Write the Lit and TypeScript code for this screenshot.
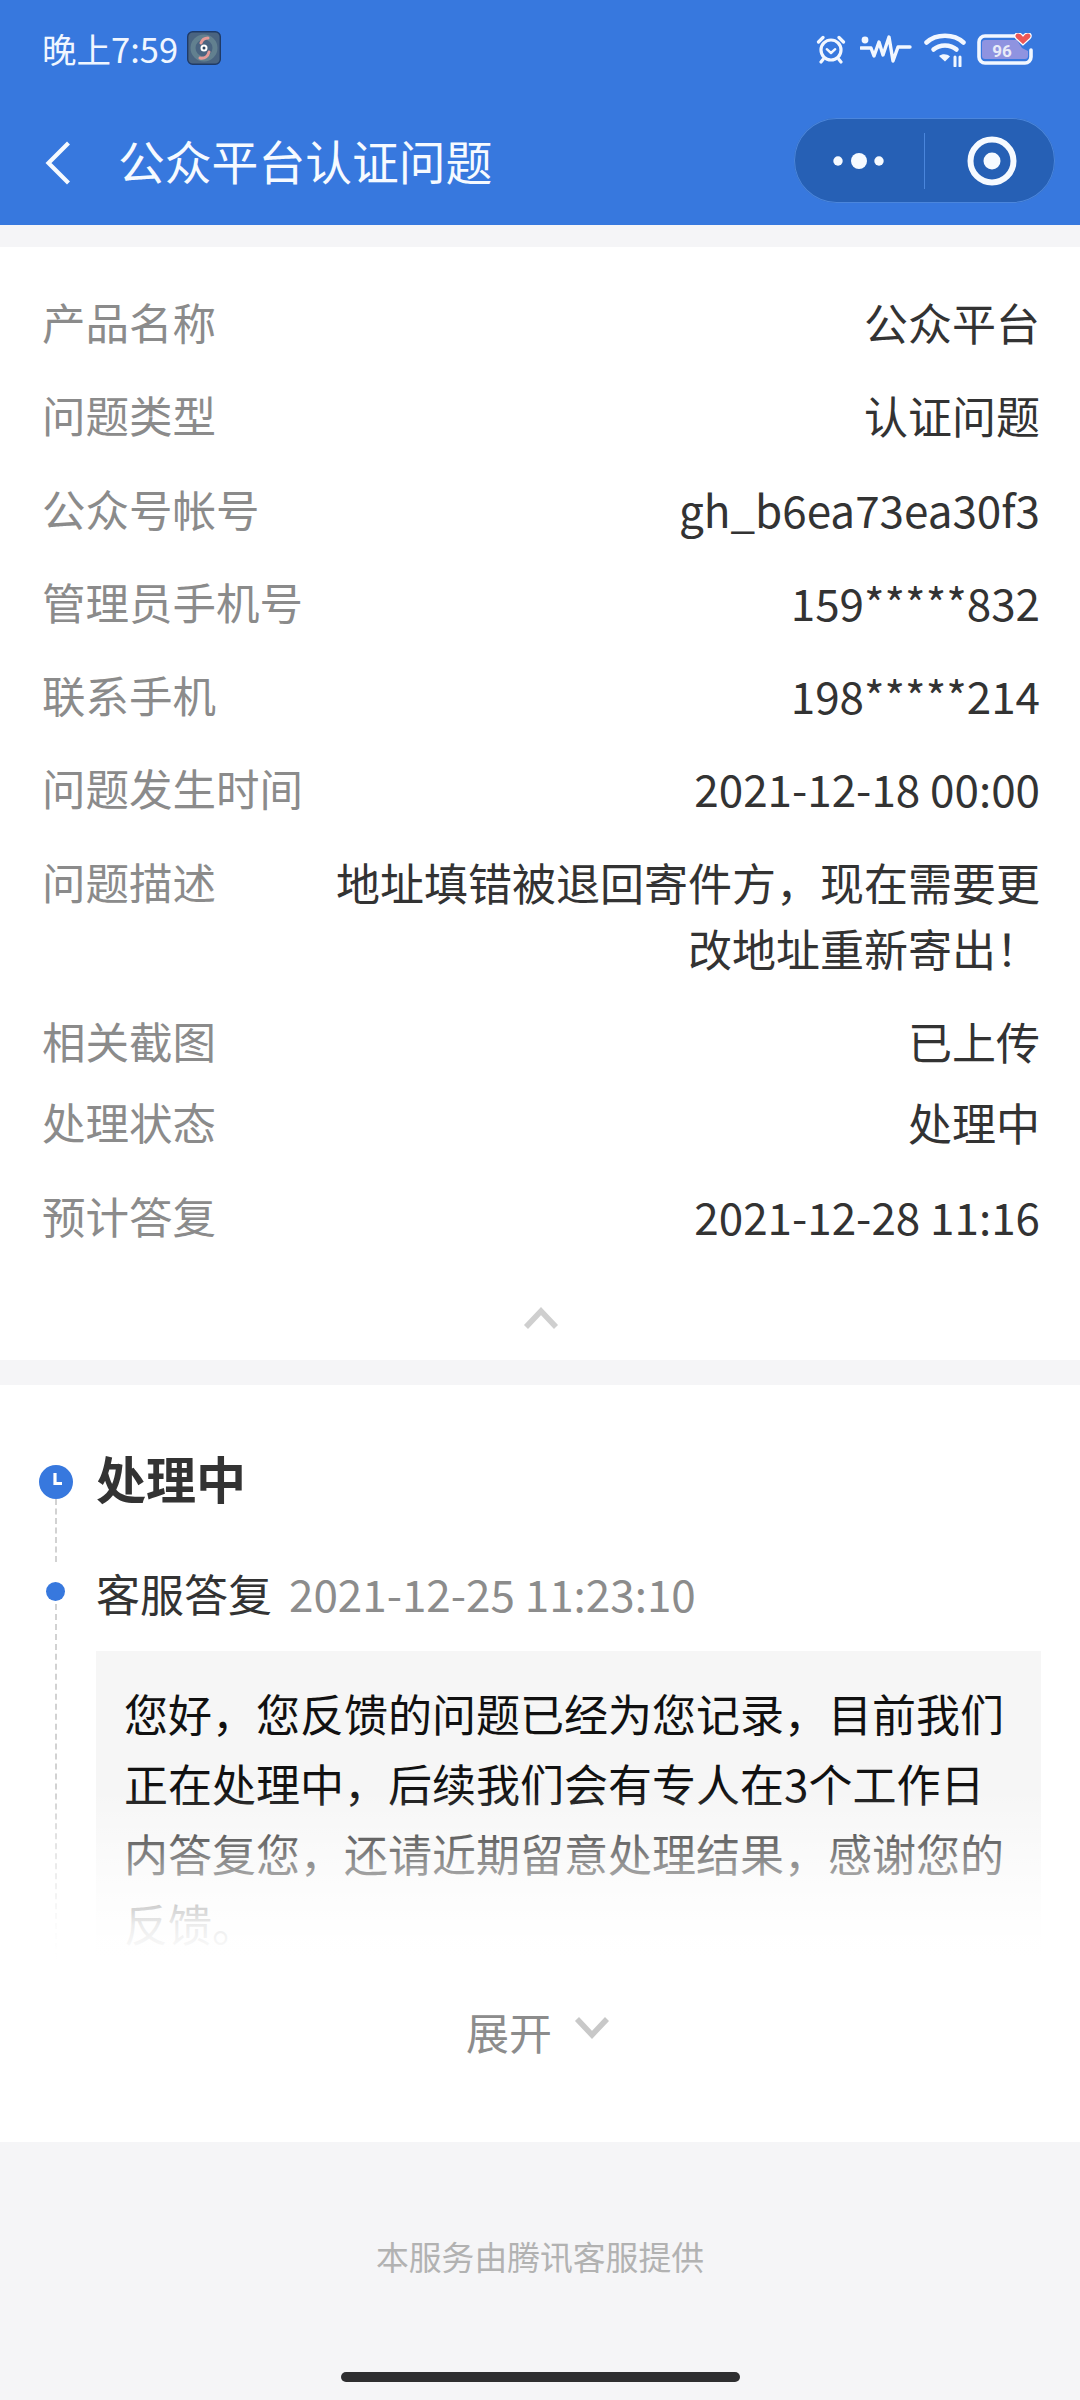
import { LitElement, html, css } from "lit";
import { customElement } from "lit/decorators.js";

const rows: [string, string, string?][] = [
  ["产品名称", "公众平台"],
  ["问题类型", "认证问题"],
  ["公众号帐号", "gh_b6ea73ea30f3"],
  ["管理员手机号", "159*****832"],
  ["联系手机", "198*****214"],
  ["问题发生时间", "2021-12-18 00:00"],
  ["问题描述", "地址填错被退回寄件方，现在需要更改地址重新寄出！"],
  ["相关截图", "已上传", "tight"],
  ["处理状态", "处理中"],
  ["预计答复", "2021-12-28 11:16"],
];

@customElement("app-root")
export class AppRoot extends LitElement {
  static styles = css`
    :host {
      display: block;
      width: 1080px;
      height: 2400px;
      overflow: hidden;
      background: #f5f5f7;
      font-family: "Noto Sans CJK SC", "Noto Sans", sans-serif;
      color: #333;
    }
    .top { background: #3778de; height: 225px; display: flex; flex-direction: column; color: #fff; }
    .status { height: 100px; display: flex; align-items: center; padding: 0 46px 0 42px; box-sizing: border-box; }
    .clock { font-size: 34.5px; line-height: 34px; color: #f0f6ff; margin-top: -4px; }
    .appicon { margin: -4px 0 0 9px; display: block; }
    .spacer { flex: 1; }
    .sicons { display: flex; align-items: center; gap: 12px; margin-top: -2px; }
    .nav { flex: 1; display: flex; align-items: center; padding: 0 25px 6px 45px; }
    .back { display: block; margin-top: 6px; }
    .title { font-size: 46.800px; line-height: 60px; margin-left: 47px; color: #f6faff; }
    .capsule {
      width: 261px; height: 85px; border-radius: 43px; background: #2660b5;
      box-shadow: inset 0 0 0 1px #4b86dc; display: flex; align-items: center; margin-top: 2px;
    }
    .cap-l { width: 130px; height: 56px; display: flex; align-items: center; justify-content: center; border-right: 1px solid #4a86dc; }
    .cap-r { flex: 1; display: flex; align-items: center; justify-content: center; padding-left: 3px; }
    .card { background: #fff; }
    .info { margin-top: 22px; height: 1113px; padding: 28px 40px 0 42px; box-sizing: border-box; }
    .row { display: flex; justify-content: space-between; padding: 14px 0 13.3px; line-height: 66px; }
    .row.tight { padding-bottom: 1.4px; }
    .lab { color: #8b8b8b; white-space: nowrap; font-size: 43.5px; }
    .val { color: #333; width: 708px; text-align: right; font-size: 44px; }
    .fold { display: flex; justify-content: center; margin-top: 44px; }
    .progress { margin-top: 25px; height: 757px; box-sizing: border-box; padding-top: 65px; }
    .tl { position: relative; }
    .item { display: flex; padding-left: 39px; }
    .rail { width: 34px; flex: none; margin-right: 23px; display: flex; flex-direction: column; align-items: center; }
    .rail svg { display: block; flex: none; }
    .dash { flex: 1; width: 0; border-left: 2px dashed #d2d2d2; }
    .dot { width: 19px; height: 19px; border-radius: 50%; background: #3778de; flex: none; margin: 20px 2px 3px 0; }
    .ico { margin-top: 15px; }
    .h { font-size: 50px; font-weight: 700; line-height: 56px; color: #333; padding-bottom: 57px; margin-top: -1px; }
    .body { flex: 1; padding-right: 39px; }
    .meta { font-size: 44px; line-height: 60px; color: #333; display: flex; gap: 17px; margin-top: 1px; }
    .time { color: #8c8c8c; }
    .box { margin-top: 28px; background: #f6f6f6; padding: 27px 28px 1px; font-size: 44px; line-height: 70px; color: #111; }
    .fade { position: absolute; left: 0; right: 0; bottom: 0; height: 170px;
      background: linear-gradient(rgba(255,255,255,0), rgba(255,255,255,.55) 45%, rgba(255,255,255,.92) 80%, #fff); }
    .more { display: flex; align-items: center; justify-content: center; gap: 22px; margin-top: 42px; padding-right: 4px; font-size: 43px; line-height: 60px; color: #8c8c8c; }
    .more svg { margin-top: -6px; }
    .foot { padding-top: 89px; text-align: center; font-size: 32.8px; line-height: 50px; color: #b2b2b2; }
    .home { width: 399px; height: 10px; border-radius: 5px; background: #2e2e30; margin: 91px auto 0; }
    .alarm { margin-right: 2px; }
    .batt { margin-left: -2px; }
  `;

  private statusIcons() {
    return html`<div class="sicons">
      <svg class="alarm" width="30" height="30" viewBox="0 0 30 30" fill="none" stroke="#f2f7ff" stroke-linecap="round" stroke-linejoin="round">
        <circle cx="15" cy="16" r="10" stroke-width="3.2"/>
        <path d="M10.8 15.2 15 19l4.2-3.8" stroke-width="2.4"/>
        <path d="M2.500 8 7 3.500M27.500 8 23 3.500M7 25.500 5 28M23 25.500 25 28" stroke-width="3.2"/>
      </svg>
      <svg width="52" height="30" viewBox="0 0 52 30" fill="none" stroke="#f2f7ff" stroke-width="3.4" stroke-linecap="round" stroke-linejoin="round">
        <circle cx="5" cy="6" r="3.4" fill="#f2f7ff" stroke="none"/>
        <path d="M1 14h10l3 8 5-14 4 13 6-18 4 24 5-14h12"/>
      </svg>
      <svg width="42" height="36" viewBox="0 0 42 36" fill="none" stroke="#f2f7ff" stroke-linecap="round">
        <path d="M2.500 11.500C12 2.500 30 2.500 39.500 11.500" stroke-width="4.500"/>
        <path d="M9.500 18.500C15.500 13 26.500 13 32.500 18.500" stroke-width="4.500"/>
        <path d="M15 25 21 30.500 26 25.500C23 22.500 18 22.500 15 25Z" fill="#f2f7ff" stroke="none"/>
        <path d="M31 26v9M36 26v9" stroke-width="3"/>
      </svg>
      <svg class="batt" width="58" height="32" viewBox="0 0 58 32" fill="none">
        <path d="M40 3H9a6 6 0 0 0-6 6v15a6 6 0 0 0 6 6h40a6 6 0 0 0 6-6v-7" stroke="#f2f7ff" stroke-width="3.6" stroke-linecap="round"/>
        <path d="M9 7h32l5 8 6 3v5a3 3 0 0 1-3 3H9a3 3 0 0 1-3-3V10a3 3 0 0 1 3-3Z" fill="#8f93e0"/>
        <text x="26" y="23.500" text-anchor="middle" font-size="17" font-weight="700" fill="#e8ebf8" font-family="Roboto, sans-serif">96</text>
        <path d="M47 12 40 5.500C37.500 3 39.500-.5 42.500 0c2 .2 3.500 1.500 4.500 3 1-1.500 2.500-2.800 4.500-3 3-.5 5 3 2.500 5.500Z" fill="#ec5757" stroke="#fff" stroke-width="1.200"/>
      </svg>
    </div>`;
  }

  render() {
    return html`
      <div class="top">
        <div class="status">
          <span class="clock">晚上7:59</span>
          <svg class="appicon" width="34" height="34" viewBox="0 0 34 34" fill="none">
            <rect x="0.700" y="0.700" width="32.600" height="32.600" rx="5" fill="#4a6480" stroke="#1f3a66" stroke-width="1.400"/>
            <circle cx="17" cy="17" r="11" stroke="#62808f" stroke-width="5"/>
            <path d="M13 27c5 1 8-2 9-6M21 7c-4 0-6 2-7 5" stroke="#e49a98" stroke-width="3" stroke-linecap="round"/>
            <circle cx="17" cy="17" r="3.500" fill="#fff"/>
            <circle cx="17" cy="17" r="1.500" fill="#2e4760"/>
          </svg>
          <span class="spacer"></span>
          ${this.statusIcons()}
        </div>
        <div class="nav">
          <svg class="back" width="26" height="44" viewBox="0 0 26 44" fill="none"><path d="M23.500 2 3.500 22l20 20" stroke="#f6faff" stroke-width="4.200"/></svg>
          <span class="title">公众平台认证问题</span>
          <span class="spacer"></span>
          <div class="capsule">
            <div class="cap-l">
              <svg width="60" height="20" viewBox="0 0 60 20" fill="#f6faff"><circle cx="9" cy="10" r="4.700"/><circle cx="30" cy="10" r="8"/><circle cx="50" cy="10" r="4.700"/></svg>
            </div>
            <div class="cap-r">
              <svg width="50" height="50" viewBox="0 0 50 50" fill="none"><circle cx="25" cy="25" r="21.500" stroke="#f6faff" stroke-width="6"/><circle cx="25" cy="25" r="8.500" fill="#f6faff"/></svg>
            </div>
          </div>
        </div>
      </div>
      <div class="card info">
        ${rows.map(([l, v, c]) => html`<div class="row ${c ?? ""}"><span class="lab">${l}</span><span class="val">${v}</span></div>`)}
        <div class="fold">
          <svg width="36" height="24" viewBox="0 0 36 24" fill="none"><path d="M3 21 18 5l15 16" stroke="#cfcfcf" stroke-width="5.500"/></svg>
        </div>
      </div>
      <div class="card progress">
        <div class="tl">
          <div class="item">
            <div class="rail">
              <svg class="ico" width="34" height="34" viewBox="0 0 34 34"><circle cx="17" cy="17" r="17" fill="#3778de"/><path d="M16 8v10.500h7" fill="none" stroke="#fff" stroke-width="3.200"/></svg>
              <div class="dash"></div>
            </div>
            <div class="h">处理中</div>
          </div>
          <div class="item">
            <div class="rail">
              <div class="dot"></div>
              <div class="dash"></div>
            </div>
            <div class="body">
              <div class="meta"><span>客服答复</span><span class="time">2021-12-25 11:23:10</span></div>
              <div class="box">您好，您反馈的问题已经为您记录，目前我们正在处理中，后续我们会有专人在3个工作日内答复您，还请近期留意处理结果，感谢您的反馈。</div>
            </div>
          </div>
          <div class="fade"></div>
        </div>
        <div class="more">
          <span>展开</span>
          <svg width="36" height="24" viewBox="0 0 36 24" fill="none"><path d="M3 3l15 16L33 3" stroke="#c8c8c8" stroke-width="5.500"/></svg>
        </div>
      </div>
      <div class="foot">
        本服务由腾讯客服提供
        <div class="home"></div>
      </div>
    `;
  }
}
